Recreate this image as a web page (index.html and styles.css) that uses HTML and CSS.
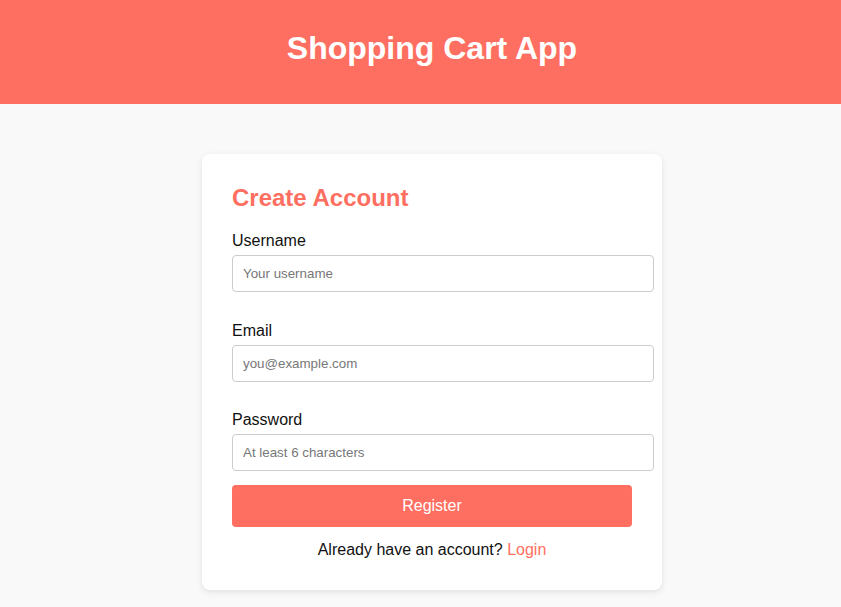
FILE: index.html
```html
<!DOCTYPE html>
<html lang="en">
<head>
<meta charset="utf-8">
<title>Shopping Cart App</title>
<link rel="stylesheet" href="styles.css">
</head>
<body>
<header class="app-header">
  <h1 class="app-title">Shopping Cart App</h1>
</header>
<main class="page">
  <section class="card">
    <h2 class="card-title">Create Account</h2>
    <form class="form">
      <div class="field">
        <label class="field-label" for="username">Username</label>
        <input class="field-input" id="username" type="text" placeholder="Your username">
      </div>
      <div class="field">
        <label class="field-label" for="email">Email</label>
        <input class="field-input" id="email" type="email" placeholder="you@example.com">
      </div>
      <div class="field">
        <label class="field-label" for="password">Password</label>
        <input class="field-input" id="password" type="password" placeholder="At least 6 characters">
      </div>
      <button class="btn-primary" type="button">Register</button>
    </form>
    <p class="switch">Already have an account? <a class="switch-link" href="#">Login</a></p>
  </section>
</main>
</body>
</html>
```
FILE: styles.css
```css
* { box-sizing: content-box; }
html, body {
  margin: 0;
  padding: 0;
}
body {
  font-family: "Liberation Sans", Arial, sans-serif;
  background: #f9f9f9;
  color: #111;
  min-height: 607px;
  padding-left: 23px;
}
.app-header {
  background: #ff6f61;
  height: 74px;
  padding-top: 30px;
  margin-left: -23px;
  padding-left: 23px;
  display: flex;
  justify-content: center;
  align-items: flex-start;
}
.app-title {
  margin: 0;
  color: #fff;
  font-size: 32px;
  font-weight: bold;
}
.page {
  display: flex;
  justify-content: center;
  padding-top: 50px;
}
.card {
  width: 400px;
  padding: 30px 30px 31px;
  background: #fff;
  border-radius: 8px;
  box-shadow: 0 2px 6px rgba(0, 0, 0, 0.1);
}
.card-title {
  margin: 0 0 20px;
  color: #ff6f61;
  font-size: 24px;
  font-weight: bold;
}
.form {
  display: flex;
  flex-direction: column;
}
.field {
  display: flex;
  flex-direction: column;
  align-items: flex-start;
  gap: 5px;
  margin-bottom: 29.5px;
}
.field:last-of-type { margin-bottom: 14px; }
.field-label {
  font-size: 16px;
  color: #111;
}
.field-input {
  width: 100%;
  padding: 10px;
  border: 1px solid #ccc;
  border-radius: 4px;
  font-family: "Liberation Sans", Arial, sans-serif;
  font-size: 13.333px;
  color: #111;
  background: #fff;
  margin: 0;
}
.field-input::placeholder { color: #777; }
.btn-primary {
  width: 100%;
  height: 42px;
  padding: 0;
  border: none;
  border-radius: 4px;
  background: #ff6f61;
  color: #fff;
  font-family: "Liberation Sans", Arial, sans-serif;
  font-size: 16px;
  margin: 0;
}
.switch {
  margin: 14px 0 0;
  text-align: center;
  font-size: 16px;
  color: #111;
}
.switch-link {
  color: #ff6f61;
  text-decoration: none;
}
```
